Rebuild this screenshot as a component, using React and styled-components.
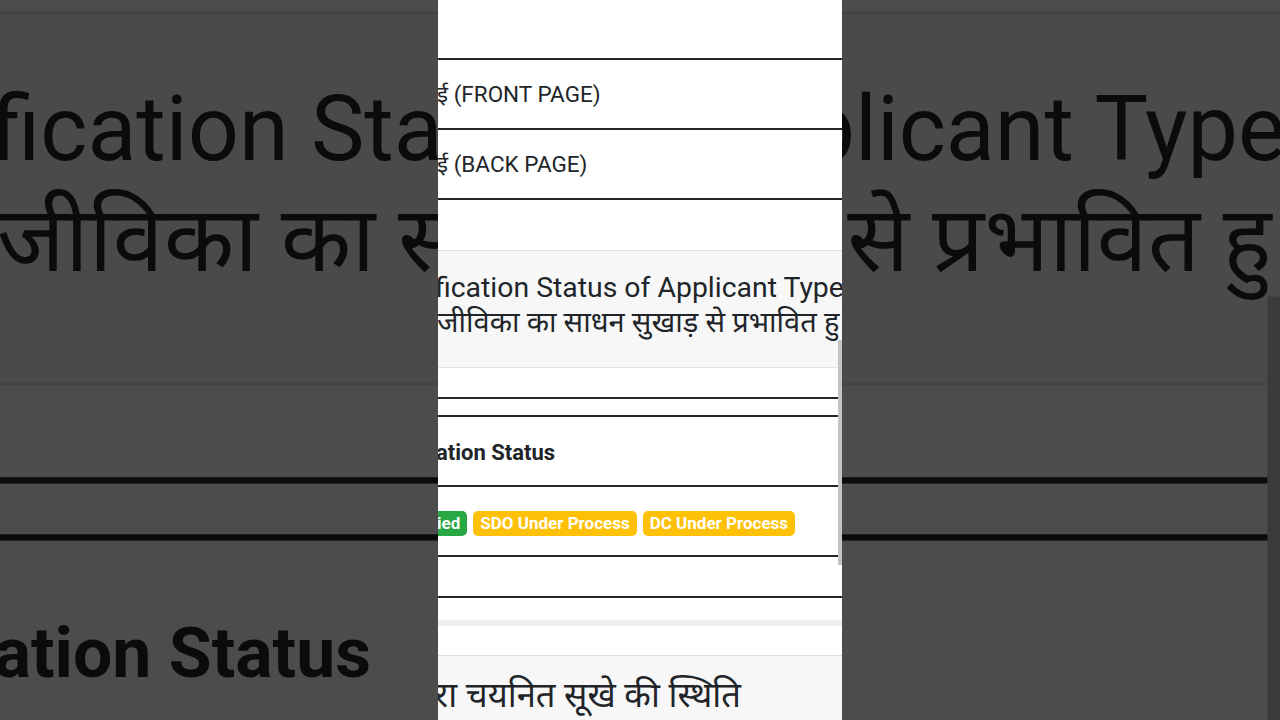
import React from "react";
import styled, { createGlobalStyle } from "styled-components";

const GlobalStyle = createGlobalStyle`
  html, body {
    margin: 0;
    padding: 0;
    background: #000;
  }
  * {
    box-sizing: border-box;
  }
`;

const SCALE = 1280 / 404;

const Stage = styled.div`
  position: relative;
  width: 1280px;
  height: 720px;
  overflow: hidden;
  display: flex;
  justify-content: center;
  background: #4c4c4c;
`;

// blown-up, dimmed copy of the frame that fills the sides
const Backdrop = styled.div`
  position: absolute;
  top: 0;
  left: 438px;
  width: 404px;
  height: 720px;
  transform-origin: 202px 360px;
  transform: scale(${SCALE});
  filter: brightness(0.3) blur(0.25px);
  pointer-events: none;
`;

const Frame = styled.div`
  position: relative;
  z-index: 1;
  width: 404px;
  height: 720px;
  overflow: hidden;
`;

const Page = styled.div`
  position: relative;
  width: 404px;
  height: 720px;
  overflow: hidden;
  background: #fff;
  color: #212529;
  font-family: Roboto, "Noto Sans", "Noto Sans Devanagari", sans-serif;
  white-space: nowrap;
`;

const DocTable = styled.div`
  padding-top: 58px;
  border-bottom: 2px solid #262626;
`;

const DocRow = styled.div`
  height: 70px;
  display: flex;
  align-items: center;
  border-top: 2px solid #262626;
  font-size: 22.5px;
  padding-bottom: 2px;
  margin-left: -1px;
`;

const Card = styled.div`
  margin-top: ${(p) => p.$gap}px;
  border-top: 1px solid #dedede;
`;

const CardHeader = styled.div`
  height: ${(p) => p.$h || 117}px;
  background: #f7f7f7;
  border-bottom: 1px solid #e3e3e3;
  padding-top: ${(p) => p.$pt || 19}px;
`;

const Title = styled.div`
  font-size: 28.4px;
  line-height: 36px;
  margin-left: -3px;
`;

const SubTitle = styled.div`
  font-size: 29px;
  line-height: 32px;
  margin-left: -1px;
`;

const SectionTitle = styled.div`
  font-size: 34.6px;
  line-height: 44px;
  margin-left: -4px;
`;

const CardBody = styled.div`
  padding: 29px 0 22px;
`;

const StatusTable = styled.div`
  border-bottom: 2px solid #262626;
`;

const Cell = styled.div`
  height: ${(p) => p.$h}px;
  border-top: 2px solid #262626;
  display: flex;
  align-items: center;
  gap: 6px;
  padding-top: ${(p) => p.$pt || 0}px;
`;

const HeadText = styled.span`
  font-size: 22px;
  font-weight: 700;
  margin-left: -2px;
  margin-top: 2px;
`;

const Badge = styled.span`
  display: inline-flex;
  align-items: center;
  height: 25px;
  padding: 0 7px;
  border-radius: 5px;
  font-size: 17px;
  font-weight: 700;
  color: #fff;
  background: ${(p) => (p.$tone === "success" ? "#28a745" : "#ffc107")};
  margin-left: ${(p) => p.$shift || 0}px;
`;

const ScrollTrack = styled.div`
  height: 6px;
  background: #efefef;
`;

const Thumb = styled.div`
  position: absolute;
  top: 340px;
  right: 0;
  width: 4px;
  height: 225px;
  background: #c4c4c4;
`;

const Screen = () => (
  <Page>
    <DocTable>
      <DocRow>ई (FRONT PAGE)</DocRow>
      <DocRow>ई (BACK PAGE)</DocRow>
    </DocTable>

    <Card $gap={50}>
      <CardHeader>
        <Title>fication Status of Applicant Type</Title>
        <SubTitle>जीविका का साधन सुखाड़ से प्रभावित हु</SubTitle>
      </CardHeader>
      <CardBody>
        <StatusTable>
          <Cell $h={18} />
          <Cell $h={70}>
            <HeadText>ation Status</HeadText>
          </Cell>
          <Cell $h={70} $pt={4}>
            <Badge $tone="success" $shift={-8}>ied</Badge>
            <Badge>SDO Under Process</Badge>
            <Badge>DC Under Process</Badge>
          </Cell>
          <Cell $h={41} />
        </StatusTable>
      </CardBody>
      <ScrollTrack />
    </Card>

    <Card $gap={29}>
      <CardHeader $h={80} $pt={17}>
        <SectionTitle>रा चयनित सूखे की स्थिति</SectionTitle>
      </CardHeader>
    </Card>

    <Thumb />
  </Page>
);

export default function App() {
  return (
    <>
      <GlobalStyle />
      <Stage>
        <Backdrop aria-hidden="true">
          <Screen />
        </Backdrop>
        <Frame>
          <Screen />
        </Frame>
      </Stage>
    </>
  );
}
